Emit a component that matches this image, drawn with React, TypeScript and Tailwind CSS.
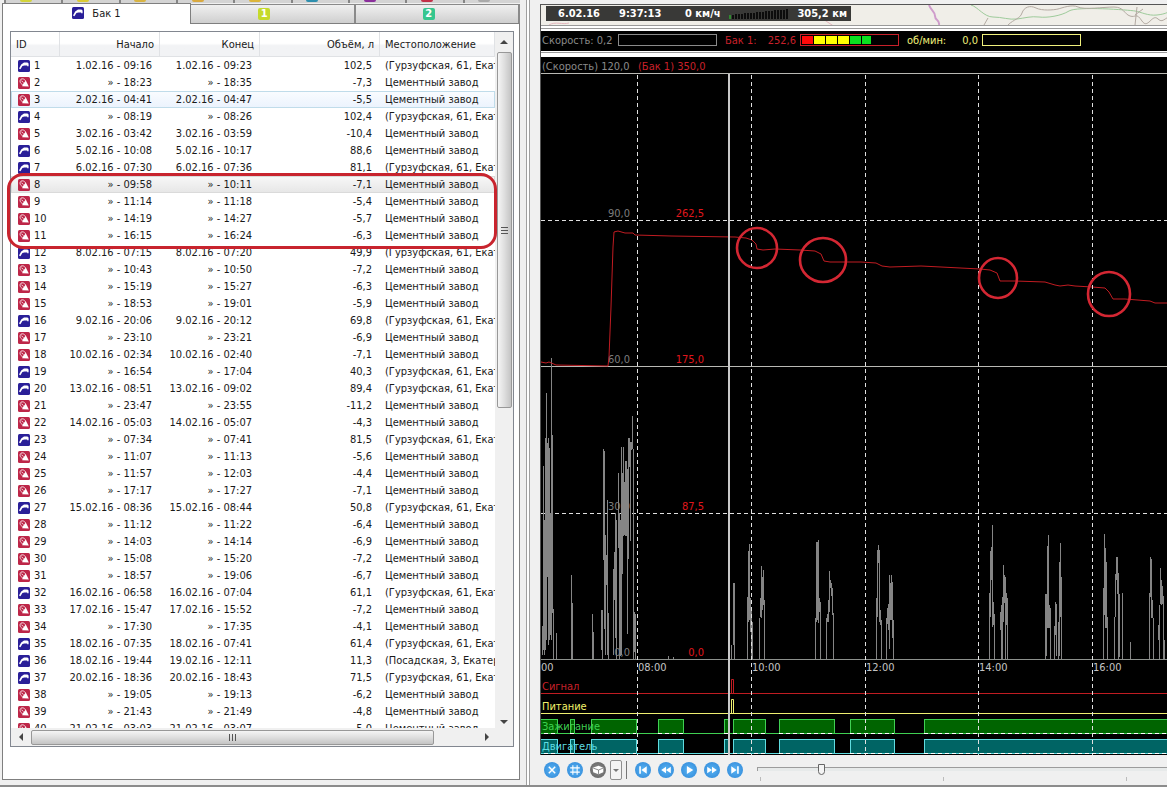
import React from "react"
import clsx from "clsx"

type EventKind = "fill" | "drain"

type FuelEvent = {
  id: number
  kind: EventKind
  start: string
  end: string
  volume: string
  place: string
}

const PLANT = "Цементный завод"
const DEPOT = "(Гурзуфская, 61, Екатеринбург)"

const row = (
  id: number,
  start: string,
  end: string,
  volume: string,
  place?: string
): FuelEvent => ({
  id,
  kind: volume.startsWith("-") ? "drain" : "fill",
  start,
  end,
  volume,
  place: place ?? (volume.startsWith("-") ? PLANT : DEPOT),
})

const EVENTS: FuelEvent[] = [
  row(1, "1.02.16 - 09:16", "1.02.16 - 09:23", "102,5"),
  row(2, "» - 18:23", "» - 18:35", "-7,3"),
  row(3, "2.02.16 - 04:41", "2.02.16 - 04:47", "-5,5"),
  row(4, "» - 08:19", "» - 08:26", "102,4"),
  row(5, "3.02.16 - 03:42", "3.02.16 - 03:59", "-10,4"),
  row(6, "5.02.16 - 10:08", "5.02.16 - 10:17", "88,6", PLANT),
  row(7, "6.02.16 - 07:30", "6.02.16 - 07:36", "81,1"),
  row(8, "» - 09:58", "» - 10:11", "-7,1"),
  row(9, "» - 11:14", "» - 11:18", "-5,4"),
  row(10, "» - 14:19", "» - 14:27", "-5,7"),
  row(11, "» - 16:15", "» - 16:24", "-6,3"),
  row(12, "8.02.16 - 07:15", "8.02.16 - 07:20", "49,9"),
  row(13, "» - 10:43", "» - 10:50", "-7,2"),
  row(14, "» - 15:19", "» - 15:27", "-6,3"),
  row(15, "» - 18:53", "» - 19:01", "-5,9"),
  row(16, "9.02.16 - 20:06", "9.02.16 - 20:12", "69,8"),
  row(17, "» - 23:10", "» - 23:21", "-6,9"),
  row(18, "10.02.16 - 02:34", "10.02.16 - 02:40", "-7,1"),
  row(19, "» - 16:54", "» - 17:04", "40,3"),
  row(20, "13.02.16 - 08:51", "13.02.16 - 09:02", "89,4"),
  row(21, "» - 23:47", "» - 23:55", "-11,2"),
  row(22, "14.02.16 - 05:03", "14.02.16 - 05:07", "-4,3"),
  row(23, "» - 07:34", "» - 07:41", "81,5"),
  row(24, "» - 11:07", "» - 11:13", "-5,6"),
  row(25, "» - 11:57", "» - 12:03", "-4,4"),
  row(26, "» - 17:17", "» - 17:27", "-7,1"),
  row(27, "15.02.16 - 08:36", "15.02.16 - 08:44", "50,8"),
  row(28, "» - 11:12", "» - 11:22", "-6,4"),
  row(29, "» - 14:03", "» - 14:14", "-6,9"),
  row(30, "» - 15:08", "» - 15:20", "-7,2"),
  row(31, "» - 18:57", "» - 19:06", "-6,7"),
  row(32, "16.02.16 - 06:58", "16.02.16 - 07:04", "61,1"),
  row(33, "17.02.16 - 15:47", "17.02.16 - 15:52", "-7,2"),
  row(34, "» - 17:30", "» - 17:35", "-4,1"),
  row(35, "18.02.16 - 07:35", "18.02.16 - 07:41", "61,4"),
  row(36, "18.02.16 - 19:44", "19.02.16 - 12:11", "11,3", "(Посадская, 3, Екатеринбург)"),
  row(37, "20.02.16 - 18:36", "20.02.16 - 18:43", "71,5"),
  row(38, "» - 19:05", "» - 19:13", "-6,2"),
  row(39, "» - 21:43", "» - 21:49", "-4,8"),
  row(40, "21.02.16 - 03:03", "21.02.16 - 03:07", "-5,0"),
]

function EventIcon({ kind }: { kind: EventKind }) {
  return (
    <svg viewBox="0 0 12 12" className="size-3 shrink-0">
      <rect width="12" height="12" rx="1.5" fill={kind === "fill" ? "#2a1f98" : "#bd2648"} />
      {kind === "fill" ? (
        <path d="M1 8.6 3.2 4.4 6 2.6h3.4l1.2 1v2.6H9.2V5.4H6.4L4.4 6 2.4 9.2Z" fill="#fff" />
      ) : (
        <>
          <path d="M4.6 7.6 7.8 3.4 10.8 9.4 4.2 9.2Z" fill="#fff" />
          <path d="M4.4 7.4C1.8 6.4 1.4 3.4 3 2.2c1.800-1 3.400 0 4.600 1.600M3.400 3.600l2 2" stroke="#f6dbe1" fill="none" />
        </>
      )}
    </svg>
  )
}

// TABS

const UPPER_TABS = [
  "bg-[#d3d43a]",
  "bg-[#dccb34]",
  "bg-[#d8b443]",
  "bg-[#d9a93f]",
  "bg-[#dcb53a]",
  "bg-[#2e8fae]",
  "bg-[#8b2f9c]",
  "bg-[#c23048]",
  "bg-[#a9a9a9]",
]

function SideTab({ label, color }: { label: string; color: string }) {
  return (
    <button className="mt-px flex flex-1 items-center justify-center border-t border-r-2 border-t-[#8a8a8a] border-r-[#8a8a8a] bg-linear-to-b from-[#f0f0f0] to-[#cfcfcf] pr-4">
      <span
        className={clsx(
          "flex h-3 w-3 items-center justify-center rounded-[2px] text-[11px] leading-3 font-bold text-white",
          color
        )}
      >
        {label}
      </span>
    </button>
  )
}

function Tabs() {
  return (
    <>
      <div className="ml-1 flex h-[3px] shrink-0 overflow-hidden">
        {UPPER_TABS.map((color) => (
          <span key={color} className="flex flex-1 justify-center border-l-2 border-[#858585] bg-[#d4d4d4] pr-4">
            <span className={clsx("h-[2px] w-3 rounded-b-sm", color)} />
          </span>
        ))}
      </div>
      <div className="ml-[2px] flex h-[21px] shrink-0">
        <button className="flex w-[189px] items-center justify-center gap-2 border-t border-r border-l border-[#7f7f7f] bg-white pb-[2px]">
          <EventIcon kind="fill" />
          Бак 1
        </button>
        <div className="flex flex-1 border-b border-[#7f7f7f]">
          <SideTab label="1" color="bg-[#c5da2c]" />
          <SideTab label="2" color="bg-[#35c68e]" />
        </div>
      </div>
    </>
  )
}

// EVENT LIST

function EventTable() {
  return (
    <table className="w-full table-fixed border-separate border-spacing-0 text-left">
      <colgroup>
        <col className="w-[49px]" />
        <col className="w-[100px]" />
        <col className="w-[100px]" />
        <col className="w-[120px]" />
        <col />
      </colgroup>
      <thead>
        <tr className="h-[25px] bg-linear-to-b from-white from-45% to-[#f2f3f5] to-55% [&>th]:border-r [&>th]:border-b [&>th]:border-[#e0e2e5] [&>th]:px-[5px] [&>th]:py-0 [&>th]:font-normal">
          <th>ID</th>
          <th className="text-right">Начало</th>
          <th className="text-right">Конец</th>
          <th className="text-right">Объём, л</th>
          <th>Местоположение</th>
        </tr>
      </thead>
      <tbody>
        {EVENTS.map((e) => (
          <tr
            key={e.id}
            className={clsx(
              "h-[17px] [&>td]:overflow-hidden [&>td]:py-0 [&>td]:whitespace-nowrap",
              e.id === 3 && "bg-linear-to-b from-[#fafcff] to-[#ebf3fd] shadow-[inset_0_0_0_1px_#c0dcea]",
              e.id === 8 && "bg-linear-to-b from-[#f8f8f8] to-[#e6e6e6] shadow-[inset_0_0_0_1px_#dadada]"
            )}
          >
            <td className="px-[7px]">
              <span className="flex items-center gap-1">
                <EventIcon kind={e.kind} />
                {e.id}
              </span>
            </td>
            <td className="px-2 text-right">{e.start}</td>
            <td className="px-2 text-right">{e.end}</td>
            <td className="px-2 text-right">{e.volume}</td>
            <td className="pl-[5px]">{e.place}</td>
          </tr>
        ))}
      </tbody>
    </table>
  )
}

function Arrow({ className }: { className?: string }) {
  return (
    <svg viewBox="0 0 8 4" className={clsx("h-1 w-2 shrink-0", className)}>
      <path d="M0 4 4 0l4 4Z" fill="#444" />
    </svg>
  )
}

function EventList() {
  return (
    <div className="relative grid min-h-0 flex-1 grid-cols-[minmax(0,1fr)_18px] grid-rows-[minmax(0,1fr)_18px] border border-[#828790] bg-white">
      <div className="overflow-hidden">
        <EventTable />
      </div>
      {/* VERTICAL SCROLL */}
      <div className="flex flex-col items-center bg-[#f0f0f0]">
        <Arrow className="my-2" />
        <div className="flex h-[356px] w-[15px] flex-col items-center justify-center gap-[2px] rounded-[2px] border border-[#989898] bg-linear-to-r from-[#f5f5f5] via-[#dedede] to-[#c4c4c4]">
          <span className="h-px w-[7px] bg-[#555]" />
          <span className="h-px w-[7px] bg-[#555]" />
          <span className="h-px w-[7px] bg-[#555]" />
        </div>
        <Arrow className="mt-auto mb-1 rotate-180" />
      </div>
      {/* HORIZONTAL SCROLL */}
      <div className="flex items-center bg-[#f0f0f0]">
        <Arrow className="mx-[6px] -rotate-90" />
        <div className="flex h-[15px] w-[403px] items-center justify-center gap-[2px] rounded-[2px] border border-[#989898] bg-linear-to-b from-[#f5f5f5] via-[#dedede] to-[#c4c4c4]">
          <span className="h-[7px] w-px bg-[#555]" />
          <span className="h-[7px] w-px bg-[#555]" />
          <span className="h-[7px] w-px bg-[#555]" />
        </div>
        <Arrow className="mr-1 ml-auto rotate-90" />
      </div>
      <div className="bg-[#f0f0f0]" />
      {/* marks the drains of 6.02.16 */}
      <div className="pointer-events-none absolute top-[141px] right-4 -left-1 h-[76px] rounded-2xl border-3 border-[#c8242e]" />
    </div>
  )
}

// MAP STRIP

function MapStrip() {
  return (
    <div className="relative h-[22px] shrink-0 overflow-hidden border-t border-b border-t-[#555] border-b-[#9a9a9a] bg-[#f0eee8]">
      <svg className="absolute inset-0 h-full w-full">
        <g fill="none">
          <path d="M388 0c2 6 6 6 6 11s5 3 4 9" stroke="#cf9ccb" strokeWidth="2" />
          <path d="M430 0c7 2 13 12 22 12s16 3 24 2 14-3 22-2 22-1 30-6 60-1 66 0 13 5 22 4 12-3 20-8" stroke="#9ecb9b" />
          <path d="M467 20c6-6 12-6 14-12s8-8 14-5 18 2 22 1 14-5 20-2 26 0 36 0 10 7 16 9 6-4 12 5 10-8 16-2 8-6 20-3" stroke="#b3aaa2" />
          <path d="M443 20l4-7M596 2l-2 18M594 10l8-6" stroke="#b3aaa2" />
          <path d="M8 20c6-4 14 0 20-2M282 14l12 8" stroke="#e3b6bd" />
        </g>
      </svg>
      <div className="relative mt-px ml-[5px] flex h-[15px] w-[305px] items-center bg-[#393937] pr-1 pl-3 font-bold text-white">
        <span className="w-[61px]">6.02.16</span>
        <span className="w-[66px]">9:37:13</span>
        <span className="whitespace-nowrap">0 км/ч</span>
        <svg className="ml-auto h-[10px] w-[60px]">
          {Array.from({ length: 20 }, (_, i) => (
            <rect
              key={i}
              x={i * 3}
              y={6 - Math.round(i * 0.3)}
              width="2"
              height={4 + Math.round(i * 0.3)}
              fill={i === 0 ? "#2f8a2f" : "#0c0c0c"}
            />
          ))}
        </svg>
        <span className="ml-auto whitespace-nowrap">305,2 км</span>
      </div>
    </div>
  )
}

// GAUGES

function Gauges() {
  return (
    <div className="flex h-[20px] shrink-0 items-center overflow-hidden bg-black pb-[2px] pl-px whitespace-nowrap">
      <span className="w-[76px] text-[#8a8a8a]">Скорость: 0,2</span>
      <span className="h-3 w-[99px] border border-[#8a8a8a]" />
      <span className="ml-2 flex w-[71px] justify-between text-[#c8202a]">
        <span>Бак 1:</span>
        <span>252,6</span>
      </span>
      <span className="ml-1 flex h-3 w-[99px] gap-px border border-[#c8202a] p-px">
        <span className="w-[11px] bg-[#ff0a0a]" />
        <span className="w-[11px] bg-[#ffff00]" />
        <span className="w-[11px] bg-[#ffff00]" />
        <span className="w-[11px] bg-[#ffff00]" />
        <span className="w-[11px] bg-[#0be020]" />
        <span className="w-[9px] bg-[#0be020]" />
      </span>
      <span className="ml-2 flex w-[71px] justify-between text-[#f0f07c]">
        <span>об/мин:</span>
        <span>0,0</span>
      </span>
      <span className="ml-1 h-3 w-[99px] border border-[#f0f07c]" />
    </div>
  )
}

// CHART

const HOURS = [
  { x: 96, label: "08:00" },
  { x: 210, label: "10:00" },
  { x: 324, label: "12:00" },
  { x: 437, label: "14:00" },
  { x: 551, label: "16:00" },
]

const LEVELS = [
  { y: 163, speed: "90,0", fuel: "262,5" },
  { y: 309, speed: "60,0", fuel: "175,0" },
  { y: 456, speed: "30,0", fuel: "87,5" },
  { y: 602, speed: "0,0", fuel: "0,0" },
]

// speed spans as x, top, bottom
const SPEED = [
  [1, 569, 598], [2, 409, 593], [3, 463, 598], [4, 381, 593], [5, 336, 583], [6, 386, 520], [7, 381, 588], [8, 391, 583],
  [9, 456, 578], [10, 301, 583], [11, 378, 556], [12, 552, 602], [15, 576, 602], [30, 518, 602], [31, 546, 602],
  [51, 557, 602], [52, 575, 602], [60, 553, 593], [61, 553, 602], [62, 392, 503], [63, 394, 572], [64, 478, 598], [65, 498, 528],
  [66, 443, 598], [67, 556, 602], [72, 512, 598], [73, 495, 543], [74, 456, 581], [75, 463, 602], [77, 416, 491],
  [78, 456, 602], [79, 463, 599], [80, 390, 598], [81, 416, 517], [82, 390, 479], [83, 425, 478], [84, 404, 479],
  [85, 404, 479], [86, 412, 577], [87, 381, 502], [88, 381, 410], [89, 385, 484], [90, 385, 393], [91, 359, 392],
  [92, 392, 602], [93, 555, 595], [94, 557, 602], [127, 599, 602], [132, 600, 602],
  [190, 588, 602], [192, 526, 588], [193, 526, 602],
  [206, 540, 602], [207, 494, 565], [208, 487, 563], [209, 541, 575], [210, 553, 602], [211, 565, 602],
  [218, 561, 602], [219, 541, 560], [220, 509, 561], [221, 520, 553], [222, 513, 548], [223, 543, 602],
  [274, 561, 602], [275, 485, 565], [276, 485, 563], [277, 483, 566], [278, 541, 555], [279, 545, 602],
  [285, 561, 602], [286, 557, 565], [287, 543, 565], [288, 514, 555], [289, 523, 531], [290, 526, 539], [291, 531, 558], [292, 556, 602],
  [335, 541, 602], [336, 493, 560], [337, 488, 506], [338, 493, 565], [339, 553, 568], [340, 563, 602],
  [345, 561, 602], [346, 551, 567], [347, 547, 573], [348, 518, 592], [349, 526, 563], [350, 518, 563], [351, 525, 581], [352, 563, 602],
  [448, 536, 602], [449, 494, 560], [450, 490, 523], [451, 468, 570], [452, 545, 568], [453, 557, 602],
  [459, 555, 573], [460, 548, 602], [461, 540, 602], [462, 508, 565], [463, 518, 546], [464, 520, 602], [465, 536, 568], [466, 541, 602],
  [504, 537, 602], [505, 537, 599], [506, 489, 571], [507, 478, 571], [508, 548, 571], [509, 551, 602],
  [513, 569, 602], [514, 545, 578], [515, 547, 599], [517, 565, 602], [518, 505, 599], [519, 486, 560], [520, 520, 602],
  [562, 531, 602], [563, 477, 558], [564, 491, 571], [565, 505, 571], [566, 560, 602],
  [573, 560, 602], [574, 517, 560], [575, 500, 523], [576, 500, 537], [577, 516, 602], [578, 537, 600], [581, 536, 602], [589, 585, 602],
  [608, 536, 602], [609, 500, 540], [610, 502, 561], [611, 543, 561], [612, 561, 602],
  [617, 568, 583], [618, 548, 602], [619, 511, 547], [620, 523, 548], [621, 529, 547], [622, 539, 602], [623, 583, 602],
]

const SPEED_PATH = SPEED.map(([x, top, bottom]) => `M${x}.5 ${top}V${bottom}`).join("")

const FUEL_PATH =
  "M0 305 5 306 8 305 15 308 67 309 68 300 70 250 72 190 73 175 77 174 84 176 92 176 94 178 130 179 194 180 205 181 211 183 215 187 216 192 222 193 234 192 259 193 274 194 280 197 283 204 289 205 320 205 335 206 341 209 349 210 380 209 400 210 439 212 449 213 456 216 459 224 474 224 504 225 514 228 519 229 527 228 534 229 551 230 564 231 568 235 572 242 584 242 609 244 614 246 640 246"

const CIRCLES = [
  { x: 216, y: 191, rx: 20, ry: 20 },
  { x: 282, y: 203, rx: 23, ry: 22 },
  { x: 457, y: 221, rx: 19, ry: 20 },
  { x: 568, y: 237, rx: 21, ry: 22 },
]

const ENGINE_RUNS = [
  [-4, 16],
  [29, 33],
  [50, 95],
  [117, 142],
  [183, 187],
  [192, 224],
  [238, 293],
  [309, 353],
  [383, 4000],
]

function StateRow({ top, label, line, fill }: { top: number; label: string; line: string; fill: string }) {
  return (
    <g>
      <path d={`M0 ${top + 14}.5H4000`} stroke={line} />
      {ENGINE_RUNS.map(([from, to]) => (
        <g key={from}>
          <rect x={from + 0.5} y={top + 0.5} width={to - from} height="14" fill={fill} stroke={line} />
          <path d={`M${from} ${top + 14}.5H${to}`} stroke="#fff" strokeDasharray="4 3" />
        </g>
      ))}
      <text x="1" y={top + 11} fill={line}>
        {label}
      </text>
    </g>
  )
}

function Chart() {
  return (
    <svg className="block min-h-0 w-full flex-1 bg-black text-[11px]">
      {/* LABELS */}
      <text x="1" y="13" fill="#8a8a8a">(Скорость) 120,0</text>
      <text x="97" y="13" fill="#c8202a">(Бак 1) 350,0</text>
      {LEVELS.map((l) => (
        <g key={l.y} textAnchor="end">
          <text x="89" y={l.y - 3} fill="#7d7d7d">{l.speed}</text>
          <text x="163" y={l.y - 3} fill="#e0161c">{l.fuel}</text>
        </g>
      ))}

      {/* GRID */}
      <path d="M0 16.5H4000M0 309.5H4000" stroke="#b9b9b4" />
      <path d="M0 602.5H4000" stroke="#8d918d" />
      <path d="M0 163.5H4000M0 456.5H4000" stroke="#e0e0e0" strokeDasharray="4 3" />

      <path d={SPEED_PATH} stroke="#858585" />
      <path d={FUEL_PATH} fill="none" stroke="#c01c22" />

      {/* TIME AXIS */}
      <g fill="#c4c4c4">
        <text x="0" y="614">00</text>
        {HOURS.map((h) => (
          <text key={h.label} x={h.x + 1} y="614">{h.label}</text>
        ))}
      </g>

      {/* SENSORS */}
      <path d="M0 636.5H4000M190.5 636V622.5H192.5V636" fill="none" stroke="#c01c22" />
      <text x="1" y="633" fill="#c8202a">Сигнал</text>
      <path d="M0 656.5H4000M190.5 656V642.5H192.5V656" fill="none" stroke="#efef70" />
      <text x="1" y="653" fill="#f2f26a">Питание</text>
      <StateRow top={662} label="Зажигание" line="#3fd052" fill="#006400" />
      <StateRow top={682} label="Двигатель" line="#5fdce0" fill="#006464" />

      {HOURS.map((h) => (
        <path key={h.x} d={`M${h.x}.5 18V698`} stroke="#e0e0e0" strokeDasharray="4 3" />
      ))}
      <path d="M188 17V698" stroke="#c9c9c9" strokeWidth="2" />

      {CIRCLES.map((c) => (
        <ellipse key={c.x} cx={c.x} cy={c.y} rx={c.rx} ry={c.ry} fill="none" stroke="#d42733" strokeWidth="2.6" />
      ))}
    </svg>
  )
}

// PLAYER

function RoundButton({ label, gray, children }: { label: string; gray?: boolean; children: React.ReactNode }) {
  return (
    <button
      aria-label={label}
      className={clsx(
        "flex size-4 shrink-0 items-center justify-center rounded-full bg-radial",
        gray ? "from-[#8e8e8e] to-[#5f5f5f]" : "from-[#58b4f4] to-[#2f86d6]"
      )}
    >
      <svg viewBox="0 0 15 15" className="size-4" fill="#fff">
        {children}
      </svg>
    </button>
  )
}

function Player() {
  return (
    <div className="flex h-[30px] shrink-0 items-center pl-1">
      <div className="flex items-center gap-[7px]">
        <RoundButton label="Сброс">
          <path d="M4.5 4.5l6 6m0-6-6 6" stroke="#fff" strokeWidth="1.4" />
        </RoundButton>
        <RoundButton label="Сетка">
          <path d="M5.5 3v9m4-9v9M3 5.5h9m-9 4h9" stroke="#fff" />
        </RoundButton>
        <RoundButton label="Вид" gray>
          <path d="M2.5 5.5 8 3.5l4.500 2v4L8 11.5l-5-2Z" />
          <path d="M3 5.700l5 1.800 4.300-1.800M8 7.500v3.700" stroke="#777" strokeWidth=".8" fill="none" />
        </RoundButton>
      </div>
      <button aria-label="Ещё" className="ml-1 flex h-5 w-3 items-center justify-center rounded-[2px] border border-[#8f8f8f] bg-[#f4f4f4]">
        <svg viewBox="0 0 6 3" className="h-[3px] w-[6px]">
          <path d="M0 0h6L3 3Z" fill="#777" />
        </svg>
      </button>
      <span className="mx-1 h-[18px] w-px bg-[#777]" />
      <div className="ml-1 flex items-center gap-[7px]">
        <RoundButton label="В начало">
          <path d="M4 4h1.500v7H4ZM11 4v7L6 7.500Z" />
        </RoundButton>
        <RoundButton label="Назад">
          <path d="M7.500 4.500v6l-4.500-3ZM12 4.500v6l-4.500-3Z" />
        </RoundButton>
        <RoundButton label="Пуск">
          <path d="M5.500 3.800v7.400l6-3.700Z" />
        </RoundButton>
        <RoundButton label="Вперёд">
          <path d="M7.500 4.500v6l4.500-3ZM3 4.500v6l4.500-3Z" />
        </RoundButton>
        <RoundButton label="В конец">
          <path d="M9.500 4H11v7H9.500ZM4 4v7l5-3.500Z" />
        </RoundButton>
      </div>
      <div className="ml-[14px] flex flex-1 flex-col pt-1">
        <input
          type="range"
          aria-label="Позиция"
          defaultValue={15}
          className="h-3 w-full appearance-none border-0 bg-transparent [&::-webkit-slider-runnable-track]:h-1 [&::-webkit-slider-runnable-track]:border-t [&::-webkit-slider-runnable-track]:border-l [&::-webkit-slider-runnable-track]:border-[#9c9c9c] [&::-webkit-slider-runnable-track]:bg-[#e7eaea] [&::-webkit-slider-thumb]:-mt-1 [&::-webkit-slider-thumb]:h-[11px] [&::-webkit-slider-thumb]:w-[7px] [&::-webkit-slider-thumb]:appearance-none [&::-webkit-slider-thumb]:rounded-b-full [&::-webkit-slider-thumb]:border [&::-webkit-slider-thumb]:border-[#666] [&::-webkit-slider-thumb]:bg-[#f4f4f4]"
        />
        <div className="mt-[2px] flex justify-between pr-10 pl-[3px]">
          <span className="h-1 w-px bg-[#bbb]" />
          <span className="h-1 w-px bg-[#bbb]" />
          <span className="h-1 w-px bg-[#bbb]" />
        </div>
      </div>
    </div>
  )
}

export default function App() {
  return (
    <div className="flex h-screen overflow-hidden border-b-2 border-[#8c8c8c] bg-[#f0f0f0] font-['DejaVu_Sans_Condensed','Noto_Sans',sans-serif] text-[11px] leading-[17px] text-[#1a1a1a]">
      <section className="flex w-[520px] shrink-0 flex-col pb-[5px]">
        <Tabs />
        <div className="ml-[2px] flex min-h-0 flex-1 flex-col border border-t-0 border-[#7f7f7f] bg-white pt-[7px] pr-[5px] pb-8 pl-[7px]">
          <EventList />
        </div>
      </section>
      <div className="mr-[10px] ml-[6px] w-1 shrink-0 border-r border-l border-[#a0a0a0] bg-white" />
      <section className="flex min-w-0 flex-1 flex-col pt-1">
        <div className="flex min-h-0 flex-1 flex-col border-l border-[#555] bg-white">
          <MapStrip />
          <div className="my-[2px] h-px shrink-0 bg-[#9a9a9a]" />
          <Gauges />
          <div className="mt-px mb-1 h-px shrink-0 bg-[#9a9a9a]" />
          <Chart />
        </div>
        <Player />
      </section>
    </div>
  )
}
